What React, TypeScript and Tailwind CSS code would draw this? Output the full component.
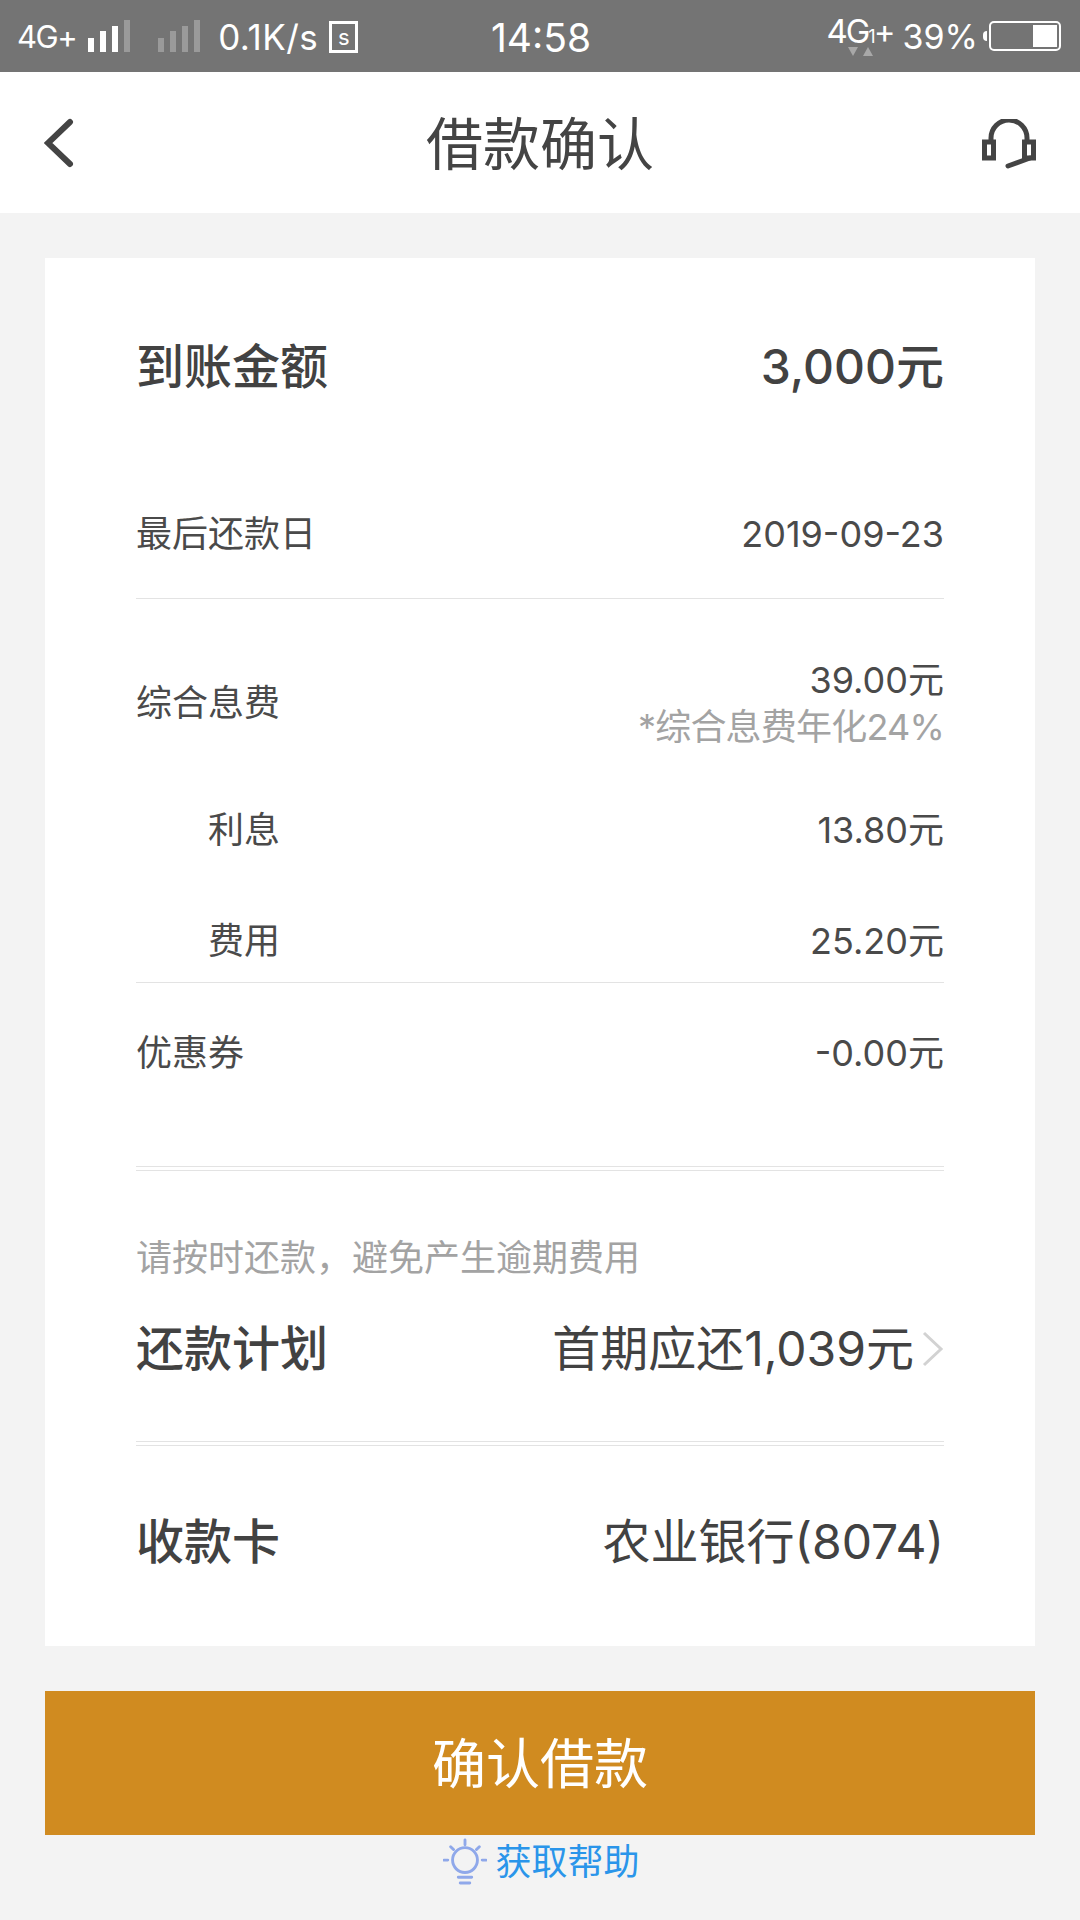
const font = "font-['Inter','Noto_Sans_CJK_SC',sans-serif]"

function SignalBars({ dim = false }: { dim?: boolean }) {
    const levels = ['h-[14px]', 'h-[21px]', 'h-[26px]', 'h-[32px]']
    return (
        <div className="flex items-end gap-[6px]">
            {levels.map((h, i) => (
                <div key={h} className={`w-[6px] ${h} ${dim || i === 3 ? 'bg-[#9a9a9a]' : 'bg-white'}`} />
            ))}
        </div>
    )
}

function StatusBar() {
    return (
        <div className="flex h-[72px] items-center bg-[#747474] pl-[17px] pr-[19px] text-white">
            <div className="flex w-[474px] items-center">
                <span className="text-[31px] leading-none tracking-[-1.5px]">4G+</span>
                <div className="ml-[12px]"><SignalBars /></div>
                <div className="ml-[28px]"><SignalBars dim /></div>
                <span className="ml-[18px] mt-[2px] text-[35px] leading-none tracking-[0.5px]">0.1K/s</span>
                <div className="ml-[11px] mt-[2px] flex h-[32px] w-[29px] items-center justify-center border-[3px] border-white text-[22px] leading-none">s</div>
            </div>
            <span className="mt-[2px] text-[39px] leading-none">14:58</span>
            <div className="ml-auto flex items-center">
                <div className="relative -mt-[10px] text-[33px] leading-none tracking-[-2px]">
                    4G<span className="text-[18px]">1</span>+
                    <svg className="absolute left-[21px] top-[31px]" width="32" height="11" viewBox="0 0 32 11" fill="#a8a8a8">
                        <path d="M1 1h10l-5 9zM16 10h10l-5-9z" />
                    </svg>
                </div>
                <span className="ml-[9px] mt-[2px] text-[34px] leading-none">39%</span>
                <div className="ml-[5px] h-[10px] w-[4px] rounded-l-sm bg-white" />
                <div className="ml-[2px] flex h-[30px] w-[72px] justify-end rounded-[5px] border-2 border-white p-[2px]">
                    <div className="w-[24px] bg-white" />
                </div>
            </div>
        </div>
    )
}

function Header() {
    return (
        <div className="grid h-[141px] grid-cols-3 items-center bg-white pl-[44px] pr-[44px]">
            <svg width="30" height="50" viewBox="0 0 30 50" fill="none" stroke="#444" strokeWidth="6" strokeLinecap="round">
                <path d="M26 4 4 25l22 21" />
            </svg>
            <h1 className="mt-[3px] whitespace-nowrap text-center text-[57px] font-normal leading-none text-[#444]">借款确认</h1>
            <svg className="mt-[2px] justify-self-end" width="54" height="50" viewBox="0 0 54 50" fill="none" stroke="#444" strokeWidth="5">
                <path d="M9 22V19a18 18 0 0 1 36 0v3" />
                <path d="M2.5 23h9v16h-9zM42.5 23h9v16h-9z" />
                <path d="M48 39 26 47" strokeLinecap="round" />
            </svg>
        </div>
    )
}

function Row({ label, value, height, sub, indent = false }: { label: string; value: string; height: string; sub?: string; indent?: boolean }) {
    return (
        <div className={`flex items-center justify-between text-[36px] leading-none text-[#4a4a4a] ${height}`}>
            <span className={indent ? 'pl-[72px]' : ''}>{label}</span>
            <div className="text-right">
                <div>{value}</div>
                {sub && <div className="mt-[11px] tracking-[-0.8px] text-[#a3a3a3]">{sub}</div>}
            </div>
        </div>
    )
}

function DoubleLine() {
    return <div className="h-[5px] border-y border-[#e3e3e3]" />
}

function LightBulb() {
    return (
        <svg className="ml-[3px]" width="44" height="50" viewBox="0 0 46 50" fill="none" stroke="#8fa8ea" strokeWidth="3" strokeLinecap="round">
            <circle cx="23" cy="23" r="13" />
            <path d="M23 2v5M8 9l3 3M38 9l-3 3M1 23h4M41 23h4M16 41h14M18 47h10" />
        </svg>
    )
}

export default function App() {
    return (
        <div className={`flex h-[1920px] w-[1080px] flex-col overflow-hidden bg-[#f3f3f3] ${font}`}>
            <StatusBar />
            <Header />

            <div className="mx-[45px] mt-[45px] h-[1388px] bg-white px-[91px]">
                {/* amount */}
                <div className="flex h-[218px] items-center justify-between text-[48px] font-medium leading-none text-[#424242]">
                    <span>到账金额</span>
                    <span>3,000元</span>
                </div>
                <div className="border-b border-[#e3e3e3]">
                    <Row label="最后还款日" value="2019-09-23" height="h-[122px] pb-[6px]" />
                </div>
                <div className="border-b border-[#e3e3e3]">
                    <Row label="综合息费" value="39.00元" sub="*综合息费年化24%" height="h-[199px] pt-[9px]" />
                    <Row label="利息" value="13.80元" height="h-[64px]" indent />
                    <div className="h-[47px]" />
                    <Row label="费用" value="25.20元" height="h-[64px]" indent />
                    <div className="h-[9px]" />
                </div>

                <Row label="优惠券" value="-0.00元" height="h-[140px]" />
                <div className="h-[43px]" />
                <DoubleLine />

                <p className="mt-[69px] text-[36px] leading-none text-[#a3a3a3]">请按时还款，避免产生逾期费用</p>
                <div className="mt-[28px] flex h-[90px] items-center justify-between leading-none text-[#424242]">
                    <span className="text-[48px] font-medium">还款计划</span>
                    <div className="flex items-center">
                        <span className="text-[48px]">首期应还1,039元</span>
                        <svg className="ml-[8px]" width="22" height="36" viewBox="0 0 22 36" fill="none" stroke="#d2d2d2" strokeWidth="3">
                            <path d="M2 2l17 16L2 34" />
                        </svg>
                    </div>
                </div>
                <div className="h-[47px]" />
                <DoubleLine />

                <div className="flex h-[191px] items-center justify-between text-[48px] leading-none text-[#424242]">
                    <span className="font-medium">收款卡</span>
                    <span>农业银行(8074)</span>
                </div>
            </div>

            <button className="mx-[45px] mt-[45px] h-[144px] bg-[#d08b20] pt-[3px] text-[54px] leading-none text-white">确认借款</button>

            <div className="mt-[2px] flex items-center justify-center gap-[8px]">
                <LightBulb />
                <span className="text-[36px] leading-none text-[#2a95ea]">获取帮助</span>
            </div>
        </div>
    )
}
